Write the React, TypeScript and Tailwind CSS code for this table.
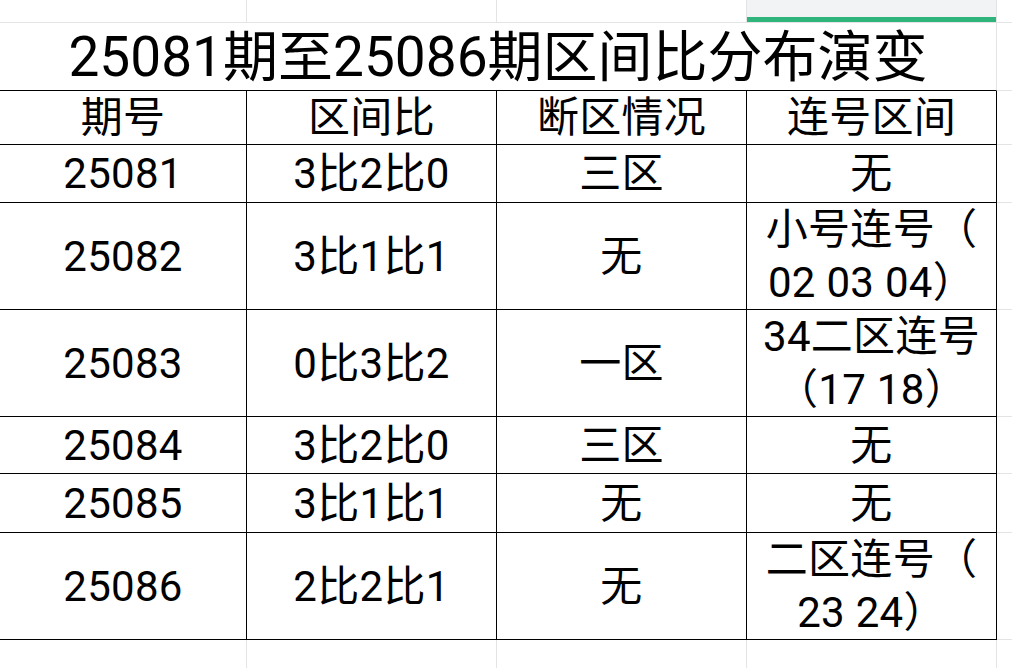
const font = { fontFamily: "Roboto, 'Noto Sans CJK SC', sans-serif" }

type Row = { h: string; cells: string[][] }

const rows: Row[] = [
  { h: 'h-[58px]', cells: [['25081'], ['3比2比0'], ['三区'], ['无']] },
  { h: 'h-[107px]', cells: [['25082'], ['3比1比1'], ['无'], ['小号连号（', '02 03 04）']] },
  { h: 'h-[107px]', cells: [['25083'], ['0比3比2'], ['一区'], ['34二区连号', '（17 18）']] },
  { h: 'h-[57px]', cells: [['25084'], ['3比2比0'], ['三区'], ['无']] },
  { h: 'h-[59px]', cells: [['25085'], ['3比1比1'], ['无'], ['无']] },
  { h: 'h-[107px]', cells: [['25086'], ['2比2比1'], ['无'], ['二区连号（', '23 24）']] },
]

const cols = 'grid grid-cols-[247px_250px_250px_250px_1fr]'

function Cell({ lines }: { lines: string[] }) {
  return (
    <div className="flex flex-col items-center justify-center border-b border-r border-black text-[42px] leading-[53px] text-black whitespace-nowrap tracking-[0.3px]">
      {lines.map((l, i) => (
        <span key={i}>{l}</span>
      ))}
    </div>
  )
}

export default function App() {
  return (
    <div className="w-[1012px] h-[668px] overflow-hidden bg-white" style={font}>
      {/* top empty row */}
      <div className={cols + ' h-[23px]'}>
        <div className="border-b border-r border-[#e4e4e4]" />
        <div className="border-b border-r border-[#e4e4e4]" />
        <div className="border-b border-r border-[#e4e4e4]" />
        <div className="border-b border-r border-[#e4e4e4] bg-[#f2f3f5] flex flex-col justify-end">
          <div className="h-[5px] bg-[#2fb47c]" />
        </div>
        <div className="border-b border-[#e4e4e4]" />
      </div>

      {/* title */}
      <div className="grid grid-cols-[997px_1fr] h-[68px]">
        <div className="flex items-center justify-center border-b border-r border-b-black border-r-[#e4e4e4] text-[55px] leading-none text-black whitespace-nowrap pt-[2px]">
          25081期至25086期区间比分布演变
        </div>
        <div className="border-b border-[#e4e4e4]" />
      </div>

      {/* header */}
      <div className={cols + ' h-[54px]'}>
        <Cell lines={['期号']} />
        <Cell lines={['区间比']} />
        <Cell lines={['断区情况']} />
        <Cell lines={['连号区间']} />
        <div className="border-b border-[#e4e4e4]" />
      </div>

      {rows.map((r, i) => (
        <div key={i} className={cols + ' ' + r.h}>
          {r.cells.map((c, j) => (
            <Cell key={j} lines={c} />
          ))}
          <div className="border-b border-[#e4e4e4]" />
        </div>
      ))}

      {/* empty rows below */}
      <div className={cols + ' h-[60px]'}>
        <div className="border-r border-[#e4e4e4]" />
        <div className="border-r border-[#e4e4e4]" />
        <div className="border-r border-[#e4e4e4]" />
        <div className="border-r border-[#e4e4e4]" />
        <div />
      </div>
    </div>
  )
}
